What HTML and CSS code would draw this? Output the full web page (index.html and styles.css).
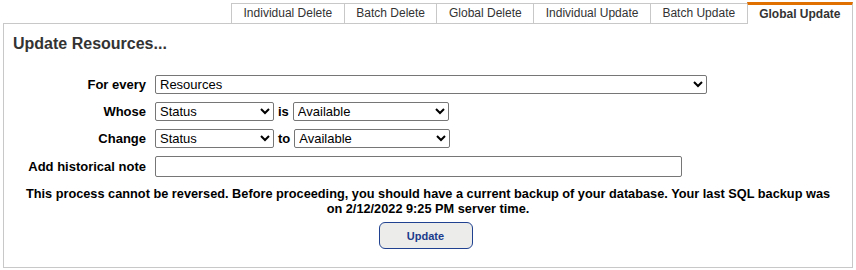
FILE: index.html
```html
<!DOCTYPE html>
<html>
<head>
<meta charset="utf-8">
<link rel="stylesheet" href="styles.css">
</head>
<body>
<div class="page">
  <div class="tabs">
    <div class="tab">Individual Delete</div>
    <div class="tab">Batch Delete</div>
    <div class="tab">Global Delete</div>
    <div class="tab">Individual Update</div>
    <div class="tab">Batch Update</div>
    <div class="tab tab-active">Global Update</div>
  </div>
  <div class="panel">
    <h1 class="title">Update Resources...</h1>
    <div class="form">
      <label class="label">For every</label>
      <div class="field">
        <select class="sel sel-wide"><option>Resources</option></select>
      </div>
      <label class="label">Whose</label>
      <div class="field">
        <select class="sel sel-attr"><option>Status</option></select>
        <span class="conj">is</span>
        <select class="sel sel-val"><option>Available</option></select>
      </div>
      <label class="label">Change</label>
      <div class="field">
        <select class="sel sel-attr"><option>Status</option></select>
        <span class="conj">to</span>
        <select class="sel sel-val"><option>Available</option></select>
      </div>
      <label class="label">Add historical note</label>
      <div class="field">
        <input class="note" type="text">
      </div>
    </div>
    <p class="warning">This process cannot be reversed. Before proceeding, you should have a current backup of your database. Your last SQL backup was on 2/12/2022 9:25 PM server time.</p>
    <div class="actions">
      <button class="btn" type="button">Update</button>
    </div>
  </div>
</div>
</body>
</html>
```
FILE: styles.css
```css
html, body {
  margin: 0;
  padding: 0;
  background: #ffffff;
}
body {
  font-family: "Liberation Sans", Arial, sans-serif;
  color: #000;
}
.page {
  padding: 2px 3px 0 3px;
}
.tabs {
  display: flex;
  justify-content: flex-end;
  align-items: flex-end;
}
.tab {
  font-size: 12px;
  line-height: 19px;
  height: 19px;
  padding: 0 11.5px;
  color: #333;
  background: #fff;
  border-top: 1px solid #c8c8c8;
  border-left: 1px solid #c8c8c8;
}
.tab-active {
  font-weight: bold;
  border-top: 3px solid #e07000;
  border-right: 1px solid #c8c8c8;
  margin-bottom: -1px;
  position: relative;
  z-index: 1;
}
.panel {
  border: 1px solid #c8c8c8;
  padding: 10px 9px 18px 9px;
}
.title {
  margin: 0;
  font-size: 16px;
  line-height: 20px;
  font-weight: bold;
  color: #333;
}
.form {
  margin-top: 21px;
  display: grid;
  grid-template-columns: 133px auto;
  column-gap: 9px;
  row-gap: 8px;
}
.label {
  justify-self: end;
  align-self: center;
  font-size: 13px;
  font-weight: bold;
  white-space: nowrap;
}
.field {
  display: flex;
  align-items: center;
  gap: 4px;
}
.sel {
  font-family: "Liberation Sans", Arial, sans-serif;
  font-size: 13px;
  height: 19px;
  box-sizing: border-box;
  color: #000;
  background: #fff;
  border: 1px solid #767676;
  border-radius: 2px;
}
.sel-wide { width: 552px; }
.sel-attr { width: 119px; }
.sel-val { width: 156px; }
.conj {
  font-size: 13px;
  font-weight: bold;
}
.note {
  width: 527px;
  height: 21px;
  box-sizing: border-box;
  border: 1px solid #767676;
  border-radius: 2px;
  font-family: "Liberation Sans", Arial, sans-serif;
  font-size: 13px;
  padding: 1px 2px;
}
.warning {
  margin: 9px 0 0 0;
  padding: 0 6px;
  text-align: center;
  font-size: 12.75px;
  line-height: 15px;
  font-weight: bold;
}
.actions {
  margin-top: 6px;
  display: flex;
  justify-content: center;
}
.btn {
  width: 94px;
  height: 27px;
  margin-right: 5px;
  background: #ececea;
  border: 1px solid #1f418f;
  border-radius: 6px;
  color: #1b3b8c;
  font-family: "Liberation Sans", Arial, sans-serif;
  font-size: 11px;
  font-weight: bold;
  padding: 0;
}
```
